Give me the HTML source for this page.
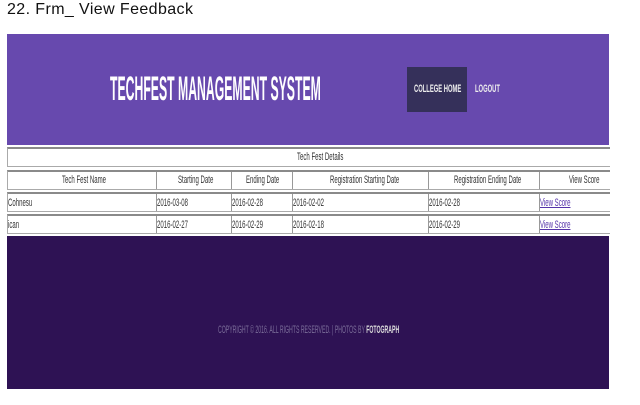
<!DOCTYPE html>
<html><head><style>
body{margin:0;width:640px;height:405px;background:#fff;position:relative;overflow:hidden;font-family:"Liberation Sans",sans-serif}
.a{position:absolute}
.t{position:absolute;white-space:nowrap;font-size:11px;color:#333;transform:scaleX(.55);transform-origin:left center;line-height:18px}
.row{position:absolute;left:7px;width:603px;border-top:2px solid #8a8a8a;border-left:1px solid #aaa;border-bottom:1px solid #aaa;box-sizing:border-box;background:#fff}
.v{position:absolute;top:0;bottom:0;border-left:1px solid #999}
a{color:#5533aa;text-decoration:underline}
</style></head><body>
<div class="a" style="left:7px;top:2px;font-size:16px;color:#111;line-height:16px;letter-spacing:0.4px">22. Frm_ View Feedback</div>
<div class="a" style="left:7px;top:34px;width:602px;height:111px;background:#6749ae"></div>
<div class="a" style="left:110px;top:72px;color:#fff;font-weight:bold;font-size:34px;line-height:34px;transform:scaleX(.36);transform-origin:left center;white-space:nowrap">TECHFEST MANAGEMENT SYSTEM</div>
<div class="a" style="left:407px;top:67px;width:60px;height:45px;background:#35305a"></div>
<div class="t" style="left:414px;top:80px;color:#eee;font-weight:bold;font-size:11px;transform:scaleX(.53)">COLLEGE HOME</div>
<div class="t" style="left:475px;top:80px;color:#eee;font-weight:bold;font-size:11px;transform:scaleX(.53)">LOGOUT</div>

<div class="row" style="top:147px;height:20px"></div>
<div class="t" style="left:297px;top:148px">Tech Fest Details</div>

<div class="row" style="top:170px;height:20px">
<div class="v" style="left:148px"></div><div class="v" style="left:223px"></div><div class="v" style="left:284px"></div><div class="v" style="left:420px"></div><div class="v" style="left:531px"></div></div>
<div class="t" style="left:62px;top:171px">Tech Fest Name</div>
<div class="t" style="left:178px;top:171px">Starting Date</div>
<div class="t" style="left:246px;top:171px">Ending Date</div>
<div class="t" style="left:330px;top:171px">Registration Starting Date</div>
<div class="t" style="left:454px;top:171px">Registration Ending Date</div>
<div class="t" style="left:569px;top:171px">View Score</div>

<div class="row" style="top:192px;height:20px">
<div class="v" style="left:148px"></div><div class="v" style="left:223px"></div><div class="v" style="left:284px"></div><div class="v" style="left:420px"></div><div class="v" style="left:531px"></div></div>
<div class="t" style="left:8px;top:194px">Cohnesu</div>
<div class="t" style="left:157px;top:194px">2016-03-08</div>
<div class="t" style="left:232px;top:194px">2016-02-28</div>
<div class="t" style="left:293px;top:194px">2016-02-02</div>
<div class="t" style="left:429px;top:194px">2016-02-28</div>
<div class="t" style="left:540px;top:194px"><a>View Score</a></div>

<div class="row" style="top:214px;height:20px">
<div class="v" style="left:148px"></div><div class="v" style="left:223px"></div><div class="v" style="left:284px"></div><div class="v" style="left:420px"></div><div class="v" style="left:531px"></div></div>
<div class="t" style="left:8px;top:216px">ican</div>
<div class="t" style="left:157px;top:216px">2016-02-27</div>
<div class="t" style="left:232px;top:216px">2016-02-29</div>
<div class="t" style="left:293px;top:216px">2016-02-18</div>
<div class="t" style="left:429px;top:216px">2016-02-29</div>
<div class="t" style="left:540px;top:216px"><a>View Score</a></div>

<div class="a" style="left:7px;top:236px;width:602px;height:153px;background:#2e1254"></div>
<div class="t" style="left:218px;top:321px;color:#7a6c98;font-size:11px;transform:scaleX(.47)">COPYRIGHT © 2016. ALL RIGHTS RESERVED. | PHOTOS BY <b style="color:#ddd">FOTOGRAPH</b></div>
</body></html>
